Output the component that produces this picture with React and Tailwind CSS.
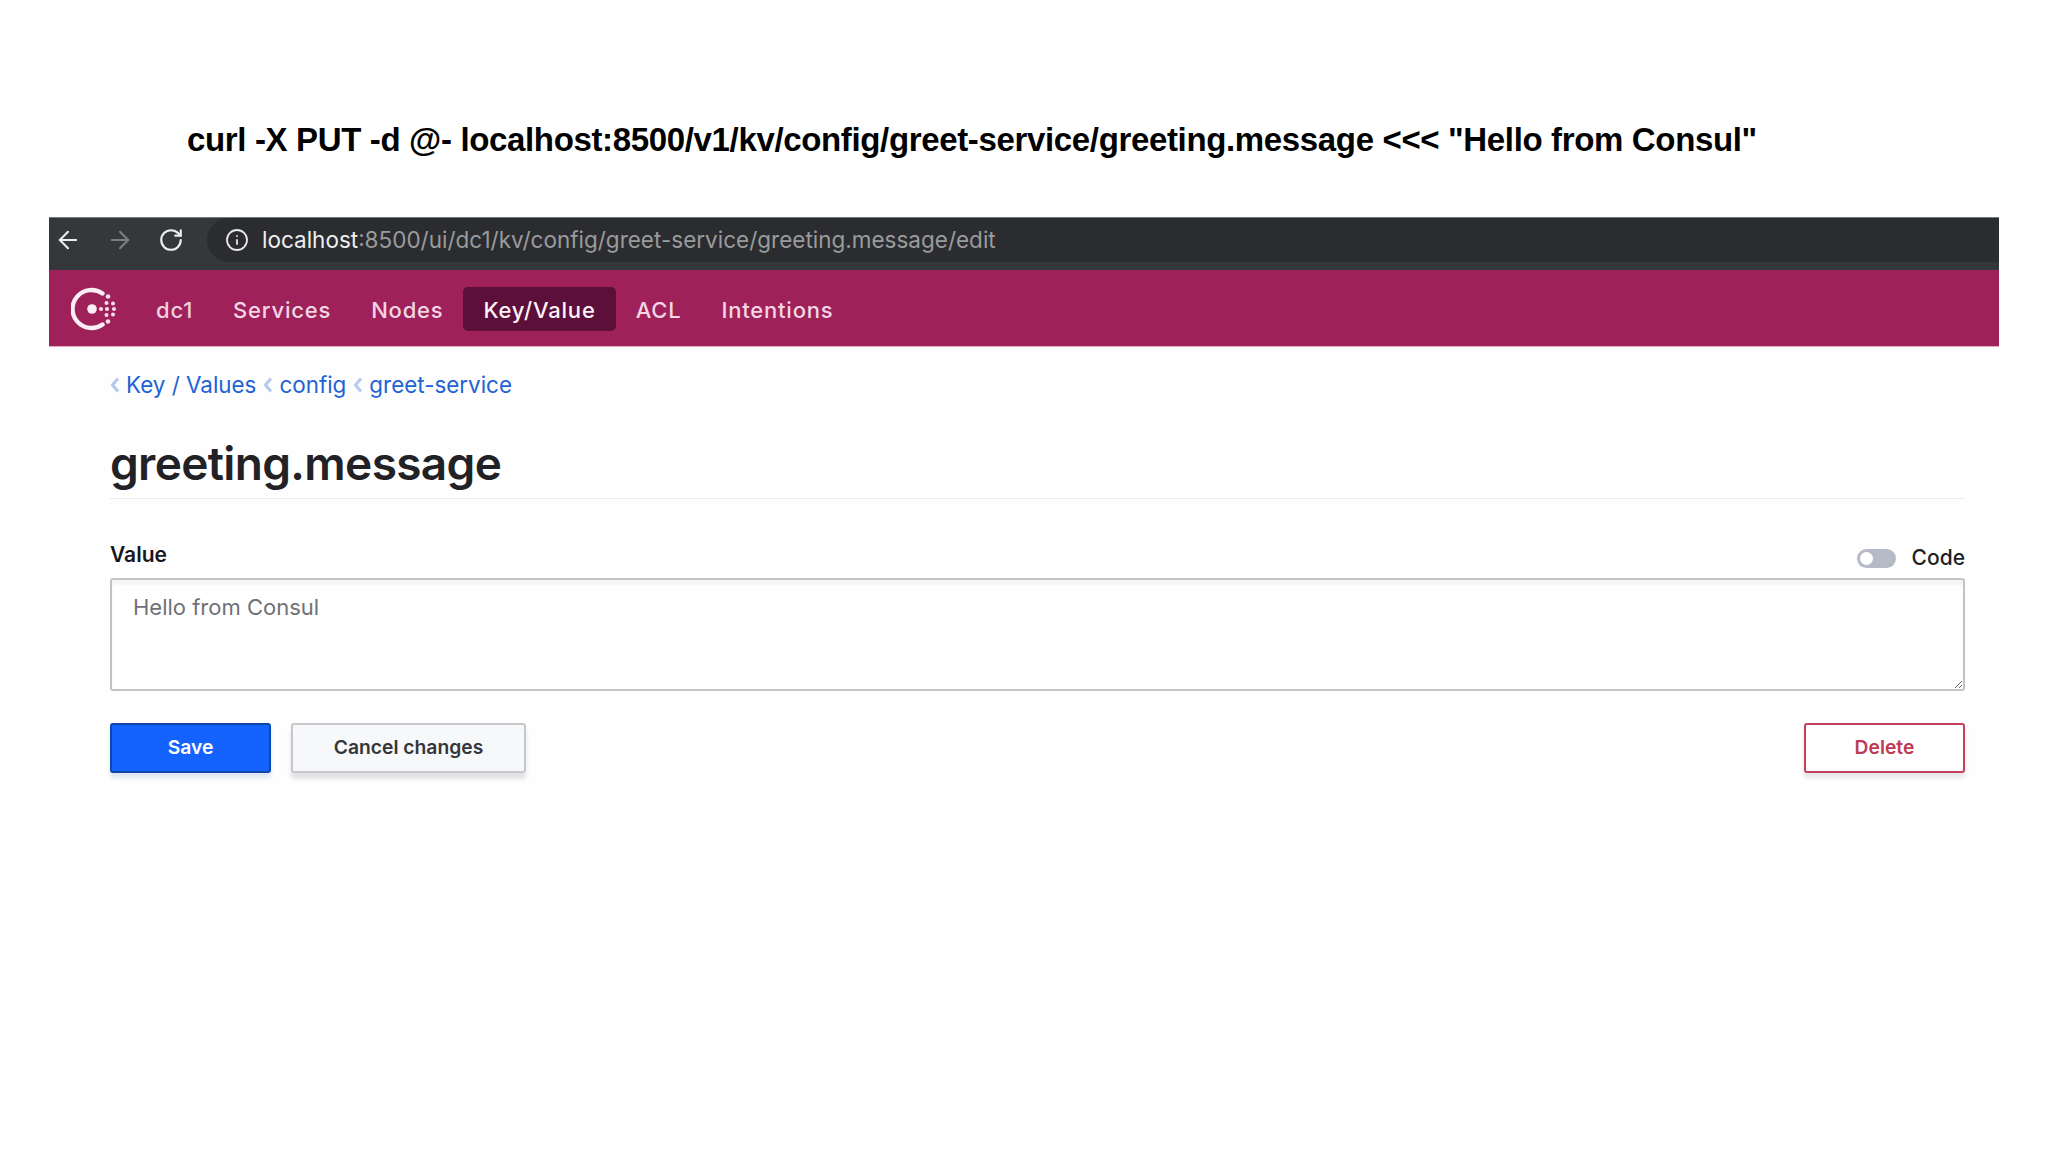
import React from "react";
import { ArrowLeft, ArrowRight, RotateCw, Info } from "lucide-react";

function Logo() {
  return (
    <svg width="46" height="46" viewBox="0 0 46 46" className="shrink-0">
      <path d="M31.5 7.5 A19 19 0 1 0 31.5 38.5" fill="none" stroke="#fbeef5" strokeWidth="4.4" strokeLinecap="round" />
      <circle cx="21" cy="23" r="4.8" fill="#fbeef5" />
      <circle cx="30" cy="23" r="2" fill="#f6dfeb" />
      <circle cx="37" cy="10.5" r="2.3" fill="#f6dfeb" />
      <circle cx="35.5" cy="17" r="2" fill="#f6dfeb" />
      <circle cx="42" cy="17.5" r="2" fill="#f6dfeb" />
      <circle cx="36" cy="23" r="2" fill="#f6dfeb" />
      <circle cx="43" cy="23" r="2" fill="#f6dfeb" />
      <circle cx="35.5" cy="29" r="2" fill="#f6dfeb" />
      <circle cx="42" cy="28.5" r="2" fill="#f6dfeb" />
      <circle cx="37" cy="35.5" r="2.3" fill="#f6dfeb" />
    </svg>
  );
}

function Crumb({ children }) {
  return (
    <span className="flex items-center">
      <svg width="10" height="18" viewBox="0 0 10 18" className="mr-[6px] shrink-0">
        <path d="M8 2.5 L2.5 9 L8 15.5" fill="none" stroke="#b4caf0" strokeWidth="3" />
      </svg>
      <span className="text-[#2263d3]">{children}</span>
    </span>
  );
}

export default function App() {
  return (
    <div className="w-[2048px] h-[1152px] bg-white overflow-hidden font-['Inter',sans-serif]">
      <div className="h-[217px] pt-[118px] pl-[187px]">
        <h1 className="font-['Liberation_Sans',sans-serif] font-bold text-[33px] leading-[44px] text-black whitespace-nowrap tracking-[-0.35px]">
          curl -X PUT -d @- localhost:8500/v1/kv/config/greet-service/greeting.message &lt;&lt;&lt; "Hello from Consul"
        </h1>
      </div>

      <div className="ml-[49px] w-[1950px] h-[935px] flex flex-col bg-[#fefefe]">
        <div className="h-[53px] flex bg-[#34383b] border-t border-[#77797c]">
          <div className="w-[158px] flex items-center pl-[5px] pb-[8px] gap-[24px] shrink-0">
            <ArrowLeft size={28} strokeWidth={1.8} className="text-[#eceded]" />
            <ArrowRight size={28} strokeWidth={1.8} className="text-[#7c7e80]" />
            <RotateCw size={26} strokeWidth={2} className="text-[#eceded]" />
          </div>
          <div className="flex-1 h-[44px] rounded-l-[22px] bg-[#2b2c2f] flex items-center pl-[18px] text-[22.5px]">
            <Info size={24} strokeWidth={1.8} className="text-[#e8e8e9] mr-[13px]" />
            <span className="text-[#eeeeee]">localhost</span>
            <span className="text-[#9a9b9d]">:8500/ui/dc1/kv/config/greet-service/greeting.message/edit</span>
          </div>
        </div>

        <nav className="h-[77px] pt-[2px] flex items-center pl-[22px] bg-[#9e2159] border-b border-[#e8a9c6] text-[22px] font-medium tracking-[0.8px] text-[#f3d5e4]">
          <Logo />
          <div className="flex items-center ml-[19px] leading-[30px]">
            <span className="px-[20px] pt-[2px] text-[#f1cfe0]">dc1</span>
            <span className="px-[20px] pt-[2px]">Services</span>
            <span className="px-[20px] pt-[2px]">Nodes</span>
            <span className="px-[20px] pt-[2px] h-[44px] flex items-center rounded-[5px] bg-[#5b0f39] text-[#fdf3f8]">Key/Value</span>
            <span className="px-[20px] pt-[2px]">ACL</span>
            <span className="px-[20px] pt-[2px]">Intentions</span>
          </div>
        </nav>

        <main className="px-[61px] pr-[34px] flex-1 flex flex-col">
          <div className="mt-[23px] h-[30px] flex items-center gap-[7px] text-[22.4px]">
            <Crumb>Key / Values</Crumb>
            <Crumb>config</Crumb>
            <Crumb>greet-service</Crumb>
          </div>

          <h2 className="mt-[35px] pb-[6px] h-[64px] text-[46px] leading-[56px] font-semibold text-[#222226] border-b border-[#ececee] tracking-[-0.66px]">
            greeting.message
          </h2>

          <div className="mt-[41px] h-[38px] flex justify-between items-start">
            <span className="text-[21px] leading-[30px] font-semibold text-[#17171a]">Value</span>
            <div className="flex items-center gap-[16px] pt-[3px]">
              <span className="w-[39px] h-[19px] rounded-full bg-[#b5bac6] flex items-center px-[3px]">
                <span className="w-[13px] h-[13px] rounded-full bg-white" />
              </span>
              <span className="text-[21px] leading-[30px] font-medium text-[#1f1f22]">Code</span>
            </div>
          </div>

          <textarea
            readOnly
            value="Hello from Consul"
            className="block w-full h-[113px] px-[21px] py-[11px] text-[22px] leading-[32px] text-[#6f7177] bg-white border-2 border-[#c2c3c7] rounded-[3px] shadow-[inset_0_5px_3px_#f5f5f6] outline-none"
          />

          <div className="mt-[32px] flex items-center text-[19.3px] font-semibold">
            <button className="w-[161px] h-[50px] pb-[1px] rounded-[3px] bg-[#1563ff] border-2 border-[#0e47ab] text-white shadow-[0_5px_4px_#dfe5f2]">
              Save
            </button>
            <button className="ml-[20px] w-[235px] h-[50px] pb-[1px] rounded-[3px] bg-[#f7f8fa] border-2 border-[#c7c8cc] text-[#35363b] shadow-[0_6px_4px_#e2e2e5]">
              Cancel changes
            </button>
            <button className="ml-auto w-[161px] h-[50px] pb-[1px] rounded-[3px] bg-white border-2 border-[#c5405a] text-[#bd3b55] shadow-[0_5px_4px_#e9e7e9]">
              Delete
            </button>
          </div>
        </main>
      </div>
    </div>
  );
}
